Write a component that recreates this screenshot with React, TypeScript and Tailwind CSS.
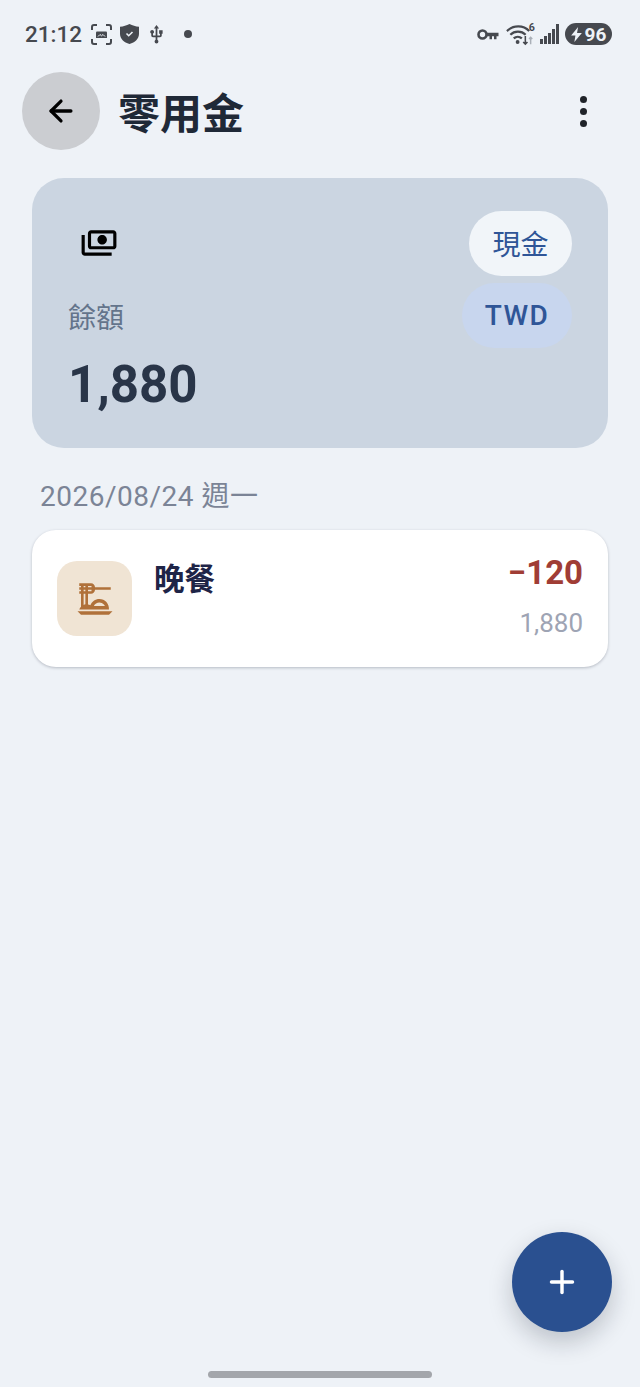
import { ArrowLeft, Plus } from "lucide-react";
import { MdOutlineDinnerDining, MdOutlinePayments, MdUsb } from "react-icons/md";

const FONT = "font-['Roboto','Noto_Sans_CJK_TC',sans-serif]";

function StatusBar() {
  return (
    <div className="flex h-[68px] items-center justify-between pl-[25px] pr-[28px] text-[#46494f]">
      <div className="flex items-center">
        <span className="w-[56px] text-[22.500px] font-medium leading-none">21:12</span>
        <svg className="ml-[9px]" width="23" height="23" viewBox="0 0 23 23" fill="none" stroke="currentColor" strokeWidth="2">
          <path d="M2 7V4a2 2 0 0 1 2-2h3M16 2h3a2 2 0 0 1 2 2v3M21 16v3a2 2 0 0 1-2 2h-3M7 21H4a2 2 0 0 1-2-2v-3" />
          <path d="M7 8.500h9a1 1 0 0 1 1 1V15H6V9.500a1 1 0 0 1 1-1z" fill="currentColor" stroke="none" />
          <path d="M8 13.500l2-2 1.500 1.300 1.500-1.300 2 2" stroke="#eef2f7" strokeWidth="1" />
        </svg>
        <svg className="ml-[6px]" width="21" height="22" viewBox="0 0 21 22">
          <path d="M10.500 1c3 1.600 6 2.400 9.500 2.800v7c0 5-4 8.700-9.500 10.200C5 19.500 1 15.800 1 10.800v-7C4.500 3.400 7.500 2.600 10.500 1z" fill="currentColor" />
          <path d="M7.500 10.500l2.200 2.200 3.800-3.700" fill="none" stroke="#eef2f7" strokeWidth="1.600" />
        </svg>
        <MdUsb className="ml-[6px]" size={21} />
        <span className="ml-[17px] h-[8px] w-[8px] rounded-full bg-[#46494f]" />
      </div>
      <div className="flex items-center">
        <svg width="22" height="13" viewBox="0 0 22 13" fill="none">
          <circle cx="5.500" cy="6.500" r="4" stroke="currentColor" strokeWidth="2.600" />
          <path d="M9 4.800h12.500v3.400h-2v3H17v-3h-2v3h-2.500v-3H9z" fill="currentColor" />
        </svg>
        <svg className="ml-[7px]" width="29" height="24" viewBox="0 0 30 24" fill="none" stroke="currentColor" strokeWidth="2.300">
          <path d="M1 9c6.500-6.500 17-6.500 23 0M4.500 12.800c4.300-4.300 11.500-4.300 15.800 0M8 16.500c2.400-2.200 6-2.200 8.400 0" />
          <circle cx="12" cy="20.300" r="2" fill="currentColor" stroke="none" />
          <path d="M20 14v8.500M17.800 20.200l2.200 2.300 2.200-2.300" strokeWidth="1.600" />
          <path d="M25.500 22.500v-7M23.800 17.200l1.700-1.700 1.700 1.700" strokeWidth="1.500" stroke="#aab0b8" />
          <text x="23.500" y="9" fontSize="11" fontWeight="700" fill="currentColor" stroke="none" fontFamily="Roboto">6</text>
        </svg>
        <div className="ml-[5px] flex h-[20px] items-end gap-[1px]">
          <span className="h-[5px] w-[3px] bg-current" />
          <span className="h-[8px] w-[3px] bg-current" />
          <span className="h-[11px] w-[3px] bg-current" />
          <span className="h-[15px] w-[3px] bg-current" />
          <span className="h-[20px] w-[3px] bg-current" />
        </div>
        <div className="ml-[6px] flex h-[22px] w-[47px] items-center justify-center gap-[3px] rounded-full bg-[#46494f] text-[#eef2f7]">
          <svg width="11" height="15" viewBox="0 0 10 14" fill="currentColor">
            <path d="M6.500 0L0 8h4l-1 6 7-8.500H5.500z" />
          </svg>
          <span className="text-[19px] font-bold leading-none">96</span>
        </div>
      </div>
    </div>
  );
}

function Header() {
  return (
    <div className="mt-[4px] flex h-[78px] items-center pl-[22px] pr-[53px]">
      <button className="flex h-[78px] w-[78px] items-center justify-center rounded-full bg-[#cbcdd1] text-black">
        <ArrowLeft size={34} strokeWidth={2.3} />
      </button>
      <h1 className="ml-[18px] mt-[8px] flex-1 text-[42px] font-bold leading-none text-[#1f2937]">零用金</h1>
      <div className="flex flex-col gap-[5px]">
        <span className="h-[7px] w-[7px] rounded-full bg-[#1f2329]" />
        <span className="h-[7px] w-[7px] rounded-full bg-[#1f2329]" />
        <span className="h-[7px] w-[7px] rounded-full bg-[#1f2329]" />
      </div>
    </div>
  );
}

function BalanceCard() {
  return (
    <div className="mx-[32px] mt-[28px] flex h-[270px] justify-between rounded-[32px] bg-[#cbd5e1] pl-[36px] pr-[36px] pt-[33px]">
      <div className="flex flex-col">
        <MdOutlinePayments size={38} className="ml-[12px] mt-[13px] -scale-x-100 text-black" />
        <span className="mt-[38px] text-[28px] leading-[38px] text-[#64748b]">餘額</span>
        <span className="mt-[17px] text-[51px] font-bold leading-[60px] text-[#293548]">1,880</span>
      </div>
      <div className="flex flex-col items-end gap-[7px]">
        <span className="flex h-[65px] w-[103px] items-center justify-center rounded-full bg-[#f1f5f9] pt-[4px] text-[28px] text-[#2f5597]">現金</span>
        <span className="flex h-[65px] w-[110px] items-center justify-center rounded-full bg-[#c8d6ee] text-[28px] font-medium tracking-[1.500px] text-[#2f5597]">TWD</span>
      </div>
    </div>
  );
}

function EntryRow() {
  return (
    <div className="mx-[32px] mt-[14px] flex h-[137px] rounded-[24px] bg-white pl-[25px] pr-[25px] pt-[31px] shadow-[0_1px_3px_rgba(15,23,42,0.25)]">
      <div className="flex h-[75px] w-[75px] items-center justify-center rounded-[20px] bg-[#f0e4d4]">
        <MdOutlineDinnerDining size={42} className="text-[#b0713a]" />
      </div>
      <span className="ml-[22px] mt-[-1px] flex-1 text-[30.500px] font-bold leading-[40px] text-[#1e2447]">晚餐</span>
      <div className="mt-[-10px] flex flex-col items-end">
        <span className="text-[33px] font-bold leading-[44px] text-[#a03d35]">−120</span>
        <span className="mt-[10px] text-[26px] leading-[36px] text-[#9ea4b4]">1,880</span>
      </div>
    </div>
  );
}

export default function App() {
  return (
    <div className={`relative h-[1387px] w-[640px] overflow-hidden bg-[#eef2f7] ${FONT}`}>
      <StatusBar />
      <Header />
      <BalanceCard />
      <div className="ml-[40px] mt-[30px] text-[28px] leading-[38px] tracking-[0.5px] text-[#7b8496]">2026/08/24 週一</div>
      <EntryRow />
      <button className="absolute left-[512px] top-[1232px] flex h-[100px] w-[100px] items-center justify-center rounded-full bg-[#2a5090] text-white shadow-[0_10px_24px_rgba(15,23,42,0.22)]">
        <Plus size={36} strokeWidth={2.3} />
      </button>
      <div className="absolute bottom-[9px] left-[208px] h-[7px] w-[224px] rounded-full bg-[#a3a6ab]" />
    </div>
  );
}
